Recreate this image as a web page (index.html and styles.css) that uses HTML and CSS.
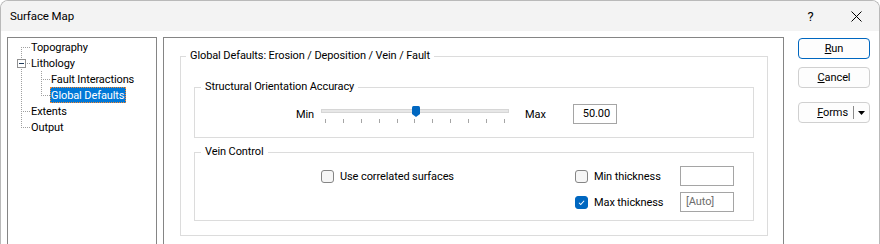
FILE: index.html
```html
<!DOCTYPE html>
<html lang="en">
<head>
    <meta charset="UTF-8">
    <title>Surface Map</title>
    <link rel="stylesheet" href="styles.css">
</head>
<body>
    <div class="window">
        <div class="titlebar">
            <span class="title">Surface Map</span>
            <span class="caption-btn help">?</span>
            <span class="caption-btn close">
                <svg viewBox="0 0 11 11" width="11" height="11"><path d="M0.5 0.5L10.5 10.5M10.5 0.5L0.5 10.5"></path></svg>
            </span>
        </div>

        <div class="content">
            <!-- page tree -->
            <div class="tree">
                <div class="node"><span class="twig first"></span><span class="label">Topography</span></div>
                <div class="node"><span class="twig tee"><span class="expander"></span></span><span class="label">Lithology</span></div>
                <div class="node"><span class="twig pipe"></span><span class="twig sub-tee"></span><span class="label">Fault Interactions</span></div>
                <div class="node"><span class="twig pipe"></span><span class="twig sub-last"></span><span class="label selected">Global Defaults</span></div>
                <div class="node"><span class="twig tee"></span><span class="label">Extents</span></div>
                <div class="node"><span class="twig last"></span><span class="label">Output</span></div>
            </div>

            <!-- page body -->
            <div class="panel">
                <fieldset class="group">
                    <legend>Global Defaults: Erosion / Deposition / Vein / Fault</legend>

                    <fieldset class="group inner accuracy">
                        <legend>Structural Orientation Accuracy</legend>
                        <div class="slider-row">
                            <span class="min-label">Min</span>
                            <div class="slider">
                                <div class="track"></div>
                                <span class="thumb">
                                    <svg viewBox="0 0 8 11" width="8" height="11"><path d="M0 1.5Q0 0 1.5 0H6.5Q8 0 8 1.5V8L4 11L0 8Z"></path></svg>
                                </span>
                                <div class="ticks">
                                    <i></i><i></i><i></i><i></i><i></i><i></i><i></i><i></i><i></i><i></i><i></i>
                                </div>
                            </div>
                            <span class="max-label">Max</span>
                            <div class="field value">50.00</div>
                        </div>
                    </fieldset>

                    <fieldset class="group inner vein">
                        <legend>Vein Control</legend>
                        <div class="vein-grid">
                            <label class="check"><span class="box"></span>Use correlated surfaces</label>
                            <label class="check"><span class="box"></span>Min thickness</label>
                            <div class="field"></div>
                            <label class="check col-2"><span class="box checked">
                                <svg viewBox="0 0 13 13" width="11" height="11"><path d="M3.5 6.8L5.6 8.9L9.6 4.4"></path></svg>
                            </span>Max thickness</label>
                            <div class="field auto">[Auto]</div>
                        </div>
                    </fieldset>
                </fieldset>
            </div>

            <div class="buttons">
                <button class="btn default"><u>R</u>un</button>
                <button class="btn"><u>C</u>ancel</button>
                <button class="btn split">
                    <span class="split-text"><u>F</u>orms</span>
                    <span class="split-arrow">
                        <svg viewBox="0 0 7 4" width="7" height="4"><path d="M0 0H7L3.5 4Z"></path></svg>
                    </span>
                </button>
            </div>
        </div>
    </div>
</body>
</html>
```

FILE: styles.css
```css
* {
    box-sizing: border-box;
    margin: 0;
    padding: 0;
}

body {
    font-family: Roboto, "Liberation Sans", sans-serif;
    font-size: 11px;
    letter-spacing: -0.1px;
    color: #000;
    background: #fff;
    width: 880px;
    height: 244px;
    overflow: hidden;
}

.window {
    width: 880px;
    height: 260px;
    border: 1px solid #b9b9b9;
    border-bottom: none;
    border-radius: 8px 8px 0 0;
    background: #fff;
    overflow: hidden;
}

/* title bar */
.titlebar {
    height: 30px;
    background: #f3f3f3;
    display: flex;
    align-items: center;
    padding-left: 9px;
}

.title {
    flex: 1;
    font-size: 11.5px;
    line-height: 16px;
}

.caption-btn {
    height: 30px;
    display: flex;
    align-items: center;
    justify-content: center;
}

.help {
    width: 45px;
    font-size: 13px;
}

.close {
    width: 46px;
}

.close svg {
    stroke: #000;
    stroke-width: 1;
    fill: none;
}

.content {
    display: flex;
    align-items: flex-start;
    padding: 6px 0 0 6px;
}

/* tree */
.tree {
    --dot-v: repeating-linear-gradient(to bottom, #a0a0a0 0 1px, transparent 1px 2px);
    --dot-h: repeating-linear-gradient(to right, #a0a0a0 0 1px, transparent 1px 2px);
    width: 150px;
    height: 220px;
    flex: none;
    border: 1px solid #858585;
    background: #fff;
    padding-top: 1px;
}

.node {
    display: flex;
    height: 16px;
}

.twig {
    flex: none;
    width: 22px;
    height: 16px;
    background-repeat: no-repeat;
}

.twig.first {
    background-image: var(--dot-v), var(--dot-h);
    background-size: 1px 8px, 9px 1px;
    background-position: 13px 8px, 13px 8px;
}

.twig.tee {
    background-image: var(--dot-v), var(--dot-h);
    background-size: 1px 16px, 9px 1px;
    background-position: 13px 0, 13px 8px;
}

.twig.pipe {
    background-image: var(--dot-v);
    background-size: 1px 16px;
    background-position: 13px 0;
}

.twig.last {
    background-image: var(--dot-v), var(--dot-h);
    background-size: 1px 9px, 9px 1px;
    background-position: 13px 0, 13px 8px;
}

.twig.sub-tee,
.twig.sub-last {
    width: 20px;
    background-image: var(--dot-v), var(--dot-h);
    background-position: 11px 0, 11px 8px;
}

.twig.sub-tee {
    background-size: 1px 16px, 9px 1px;
}

.twig.sub-last {
    background-size: 1px 9px, 9px 1px;
}

.expander {
    display: block;
    width: 9px;
    height: 9px;
    margin: 4px 0 0 9px;
    border: 1px solid #919191;
    background: #fff;
    position: relative;
}

.expander::before {
    content: "";
    position: absolute;
    left: 1px;
    top: 3px;
    width: 5px;
    height: 1px;
    background: #1f3a5a;
}

.label {
    height: 16px;
    line-height: 14px;
    padding: 1px 1px 0 0;
    border: 1px dotted transparent;
    white-space: nowrap;
}

.label.selected {
    background: #0078d7;
    color: #fff;
    border-color: #ff8728;
}

/* right hand page */
.panel {
    width: 621px;
    height: 215px;
    flex: none;
    margin-left: 6px;
    border: 1px solid #858585;
    padding: 0 15px 0 16px;
}

.group {
    border: 1px solid #dcdcdc;
    margin-top: 10px;
    padding: 15px 13px 14px 13px;
    min-width: 0;
}

.group legend {
    line-height: 16px;
    padding: 0 4px;
    margin-left: -8px;
}

.group.inner {
    margin-top: 0;
    padding: 0;
}

.group.inner legend {
    margin-left: 6px;
}

.group.accuracy {
    padding: 9px 0 13px;
}

.group.vein {
    margin-top: 6px;
    padding: 6px 0 8px;
}

.slider-row {
    display: flex;
    align-items: center;
    height: 20px;
    padding-left: 101px;
}

.min-label {
    width: 25px;
}

.slider {
    position: relative;
    width: 188px;
    height: 20px;
}

.track {
    margin-top: 5px;
    height: 4px;
    background: #e7e7e7;
    border: 1px solid #d6d6d6;
}

.thumb {
    position: absolute;
    left: 91px;
    top: 2px;
    line-height: 0;
}

.thumb svg {
    fill: #0067c0;
}

.ticks {
    display: flex;
    justify-content: space-between;
    padding: 0 4px;
    margin-top: 6px;
}

.ticks i {
    width: 1px;
    height: 4px;
    background: #a5a5a5;
}

.max-label {
    width: 48px;
    margin-left: 16px;
}

.field {
    width: 54px;
    height: 20px;
    border: 1px solid #a5a5a5;
    background: #fff;
    line-height: 18px;
}

.field.value {
    width: 44px;
    text-align: right;
    padding-right: 6px;
}

.field.auto {
    color: #6d6d6d;
    padding-left: 5px;
}

.vein-grid {
    display: grid;
    grid-template-columns: 254px 105px 54px;
    grid-auto-rows: 20px;
    row-gap: 6px;
    padding-left: 126px;
}

.check {
    display: flex;
    align-items: center;
    white-space: nowrap;
}

.check.col-2 {
    grid-column: 2;
}

.box {
    width: 13px;
    height: 13px;
    margin-right: 6px;
    border: 1px solid #858585;
    border-radius: 3px;
    background: #f6f6f6;
    display: flex;
    align-items: center;
    justify-content: center;
}

.box.checked {
    background: #0067c0;
    border-color: #0067c0;
}

.box svg {
    stroke: #fff;
    stroke-width: 1.2;
    fill: none;
}

/* buttons */
.buttons {
    width: 72px;
    flex: none;
    margin-left: 14px;
    padding-top: 1px;
    display: flex;
    flex-direction: column;
    gap: 8px;
}

.btn {
    width: 72px;
    height: 21px;
    border: 1px solid #d0d0d0;
    border-radius: 4px;
    background: #fdfdfd;
    font: inherit;
    letter-spacing: inherit;
    color: #000;
    line-height: 19px;
}

.btn.default {
    border-color: #0067c0;
}

.btn.split {
    margin-top: 6px;
    display: flex;
    align-items: center;
}

.split-text {
    flex: 1;
    text-align: right;
    padding-right: 5px;
}

.split-arrow {
    width: 16px;
    height: 13px;
    border-left: 1px solid #8a8a8a;
    display: flex;
    align-items: center;
    justify-content: center;
}

.split-arrow svg {
    fill: #000;
}
```
